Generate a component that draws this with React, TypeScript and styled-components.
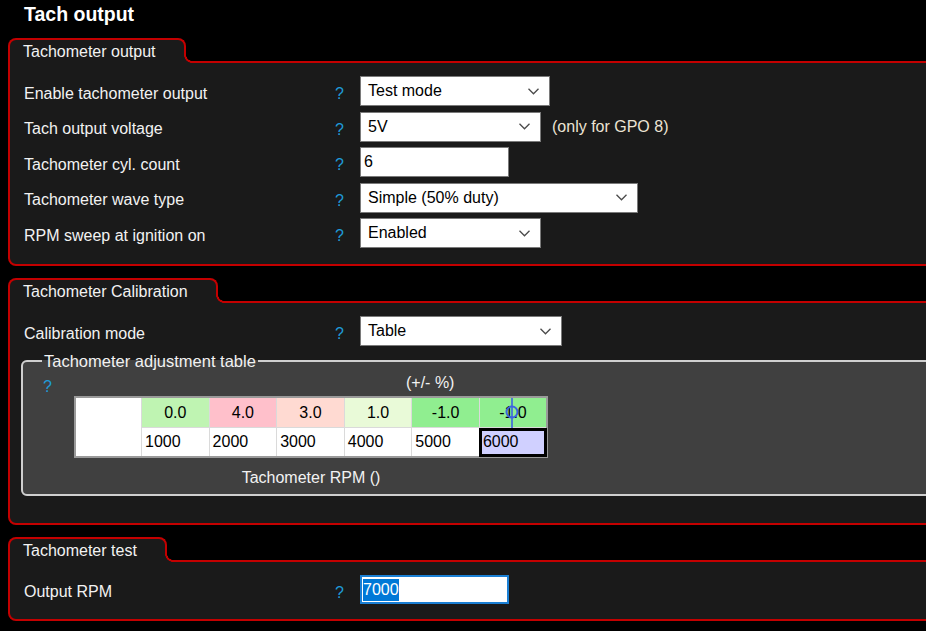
import React from 'react';
import styled, { createGlobalStyle } from 'styled-components';

const RED = '#c40000';
const PANEL = '#1a1a1a';

const GlobalStyle = createGlobalStyle`
  html, body {
    margin: 0;
    background: #000;
  }
  body {
    font-family: "Liberation Sans", Arial, sans-serif;
  }
`;

const Page = styled.div`
  width: 926px;
  height: 631px;
  box-sizing: border-box;
  padding-left: 8px;
  overflow: hidden;
  background: #000;
`;

const Title = styled.h1`
  margin: 0 0 10px 16px;
  height: 28px;
  line-height: 28px;
  font-size: 19.5px;
  font-weight: bold;
  color: #fff;
`;

const Group = styled.section`
  margin: 0 -40px 12px 0;
`;

const Tab = styled.div`
  position: relative;
  z-index: 1;
  width: fit-content;
  box-sizing: border-box;
  height: 25px;
  margin-bottom: -2px;
  padding: 0 28px 0 13px;
  border: 2px solid ${RED};
  border-bottom: none;
  border-radius: 8px 8px 0 0;
  background: ${PANEL};
  color: #f2f2f2;
  font-size: 16px;
  line-height: 23px;

  &::after {
    content: '';
    position: absolute;
    left: 100%;
    bottom: 0;
    width: 8px;
    height: 8px;
    background: radial-gradient(circle at 100% 0, #000 5.6px, ${RED} 6px, ${RED} 7.6px, ${PANEL} 8px);
  }
`;

const Body = styled.div<{ $pt: number; $pb: number }>`
  border: 2px solid ${RED};
  border-radius: 0 8px 8px 8px;
  background: ${PANEL};
  padding: ${(p) => p.$pt}px 0 ${(p) => p.$pb}px 14px;
`;

const FormGrid = styled.div`
  display: grid;
  grid-template-columns: 311px 25px auto;
  grid-auto-rows: 30px;
  row-gap: 5.5px;
  align-items: center;
`;

const Label = styled.div`
  margin-top: 5px;
  color: #f2f2f2;
  font-size: 16px;
  line-height: 18px;
`;

const Help = styled.div<{ $low?: boolean }>`
  margin-top: ${(p) => (p.$low ? 6 : 0)}px;
  color: #1f9bd8;
  font-size: 16px;
  line-height: 18px;
`;

const ControlCell = styled.div`
  display: flex;
  align-items: center;
  gap: 11px;
`;

const Hint = styled.span`
  color: #ece4d4;
  font-size: 16px;
`;

const Select = styled.div<{ $w: number }>`
  display: flex;
  align-items: center;
  justify-content: space-between;
  box-sizing: border-box;
  width: ${(p) => p.$w}px;
  height: 30px;
  padding: 0 10px 0 7px;
  background: #fff;
  border: 1px solid #7a7a7a;
  color: #000;
  font-size: 16px;
`;

const TextBox = styled.div<{ $w: number; $focus?: boolean }>`
  display: flex;
  align-items: center;
  box-sizing: border-box;
  width: ${(p) => p.$w}px;
  height: ${(p) => (p.$focus ? 29 : 30)}px;
  padding-left: ${(p) => (p.$focus ? 1 : 3)}px;
  background: #fff;
  border: ${(p) => (p.$focus ? '2px solid #1a7fd4' : '1px solid #7a7a7a')};
  color: #000;
  font-size: 16px;
`;

const Selected = styled.span`
  background: #0078d7;
  color: #fff;
  line-height: 22px;
`;

const GroupBox = styled.fieldset`
  margin: 6px 0 0 -3px;
  padding: 0 0 7px 0;
  border: 2px solid #cfcfcf;
  border-radius: 6px;
  background: #404040;
  min-width: 0;
`;

const Legend = styled.legend`
  margin-left: 19px;
  padding: 0 2px;
  color: #f2f2f2;
  font-size: 16.5px;
  line-height: 18px;
`;

const HelpRow = styled.div`
  display: grid;
  grid-template-columns: 363px auto;
  margin-top: 8px;
  padding-left: 20px;
  height: 18px;
`;

const AxisLabel = styled.div`
  margin-top: -4px;
  color: #f2f2f2;
  font-size: 16px;
  line-height: 18px;
`;

const TableWrap = styled.div`
  width: fit-content;
  margin-left: 51px;
  text-align: center;
`;

const Grid = styled.table`
  width: 474px;
  border-collapse: collapse;
  table-layout: fixed;
  border: 2px solid #9a9a9a;
  background: #fff;
  font-size: 16px;
  color: #000;
`;

const Corner = styled.td`
  width: 65px;
  padding: 0;
  background: #fff;
  border: none;
`;

const HeadCell = styled.td<{ $bg: string }>`
  position: relative;
  height: 29px;
  padding: 0;
  text-align: center;
  background: ${(p) => p.$bg};
  border: 1px solid #dadada;
  border-top: none;
`;

const DataCell = styled.td<{ $sel?: boolean }>`
  height: 29px;
  padding: 0 0 0 3px;
  box-sizing: border-box;
  text-align: left;
  background: ${(p) => (p.$sel ? '#d0d0ff' : '#fff')};
  border: 1px solid #dadada;
  border-bottom: none;
  outline: ${(p) => (p.$sel ? '3px solid #000' : 'none')};
  outline-offset: -3px;
`;

const Cursor = styled.svg`
  position: absolute;
  left: 24px;
  top: 0;
`;

const Caption = styled.div`
  margin-top: 11px;
  color: #f2f2f2;
  font-size: 16px;
  line-height: 18px;
`;

const Chevron = () => (
  <svg width="11" height="7" viewBox="0 0 11 7">
    <polyline points="0.5,0.8 5.5,5.8 10.5,0.8" fill="none" stroke="#4a4a4a" strokeWidth="1.3" />
  </svg>
);

const Combo = ({ w, children }: { w: number; children: React.ReactNode }) => (
  <Select $w={w}>
    <span>{children}</span>
    <Chevron />
  </Select>
);

const headers = [
  { v: '0.0', bg: '#bff4b2' },
  { v: '4.0', bg: '#ffc0cb' },
  { v: '3.0', bg: '#ffdad2' },
  { v: '1.0', bg: '#e9fad8' },
  { v: '-1.0', bg: '#90ee90' },
  { v: '-1.0', bg: '#90ee90' },
];
const rpms = ['1000', '2000', '3000', '4000', '5000', '6000'];

const App: React.FC = () => (
  <Page>
    <GlobalStyle />
    <Title>Tach output</Title>

    <Group>
      <Tab>Tachometer output</Tab>
      <Body $pt={13} $pb={16}>
        <FormGrid>
          <Label>Enable tachometer output</Label>
          <Help $low>?</Help>
          <ControlCell>
            <Combo w={190}>Test mode</Combo>
          </ControlCell>

          <Label>Tach output voltage</Label>
          <Help $low>?</Help>
          <ControlCell>
            <Combo w={181}>5V</Combo>
            <Hint>(only for GPO 8)</Hint>
          </ControlCell>

          <Label>Tachometer cyl. count</Label>
          <Help $low>?</Help>
          <ControlCell>
            <TextBox $w={149}>6</TextBox>
          </ControlCell>

          <Label>Tachometer wave type</Label>
          <Help $low>?</Help>
          <ControlCell>
            <Combo w={278}>Simple (50% duty)</Combo>
          </ControlCell>

          <Label>RPM sweep at ignition on</Label>
          <Help $low>?</Help>
          <ControlCell>
            <Combo w={181}>Enabled</Combo>
          </ControlCell>
        </FormGrid>
      </Body>
    </Group>

    <Group>
      <Tab>Tachometer Calibration</Tab>
      <Body $pt={13} $pb={27}>
        <FormGrid>
          <Label>Calibration mode</Label>
          <Help $low>?</Help>
          <ControlCell>
            <Combo w={202}>Table</Combo>
          </ControlCell>
        </FormGrid>
        <GroupBox>
          <Legend>Tachometer adjustment table</Legend>
          <HelpRow>
            <Help>?</Help>
            <AxisLabel>(+/- %)</AxisLabel>
          </HelpRow>
          <TableWrap>
            <Grid>
              <tbody>
                <tr>
                  <Corner rowSpan={2} />
                  {headers.map((h, i) => (
                    <HeadCell key={i} $bg={h.bg}>
                      {h.v}
                      {i === headers.length - 1 && (
                        <Cursor width="16" height="30" viewBox="0 0 16 30">
                          <line x1="8" y1="0" x2="8" y2="30" stroke="#3d63e0" strokeWidth="1.6" />
                          <circle cx="8" cy="14" r="5.5" fill="none" stroke="#3d63e0" strokeWidth="2" />
                        </Cursor>
                      )}
                    </HeadCell>
                  ))}
                </tr>
                <tr>
                  {rpms.map((r, i) => (
                    <DataCell key={r} $sel={i === rpms.length - 1}>
                      {r}
                    </DataCell>
                  ))}
                </tr>
              </tbody>
            </Grid>
            <Caption>Tachometer RPM ()</Caption>
          </TableWrap>
        </GroupBox>
      </Body>
    </Group>

    <Group>
      <Tab>Tachometer test</Tab>
      <Body $pt={13} $pb={14}>
        <FormGrid>
          <Label>Output RPM</Label>
          <Help $low>?</Help>
          <ControlCell>
            <TextBox $w={149} $focus>
              <Selected>7000</Selected>
            </TextBox>
          </ControlCell>
        </FormGrid>
      </Body>
    </Group>
  </Page>
);

export default App;
